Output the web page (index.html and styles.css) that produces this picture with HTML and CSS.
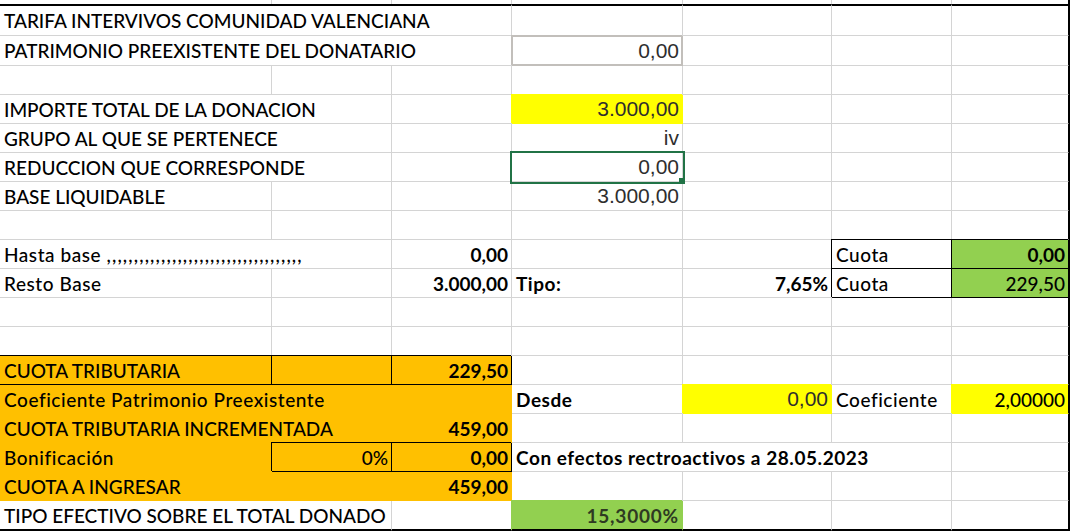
FILE: index.html
```html
<!DOCTYPE html>
<html lang="es">
<head>
<meta charset="utf-8">
<title>Tarifa intervivos</title>
<link rel="stylesheet" href="styles.css">
</head>
<body>
<div class="sheet">
  <!-- stub row above the table -->
  <div class="c stub"></div><div class="c stub"></div><div class="c stub"></div><div class="c stub"></div><div class="c stub"></div><div class="c stub"></div><div class="c stub g"></div>

  <!-- row 1 -->
  <div class="c top s3">TARIFA INTERVIVOS COMUNIDAD VALENCIANA</div>
  <div class="c top"></div><div class="c top"></div><div class="c top"></div><div class="c top g"></div>

  <!-- row 2 -->
  <div class="c s3">PATRIMONIO PREEXISTENTE DEL DONATARIO</div>
  <div class="c num r gbox">0,00</div>
  <div class="c"></div><div class="c"></div><div class="c g"></div>

  <!-- row 3 -->
  <div class="c"></div><div class="c"></div><div class="c"></div><div class="c"></div><div class="c"></div><div class="c"></div><div class="c g"></div>

  <!-- row 4 -->
  <div class="c s2">IMPORTE TOTAL DE LA DONACION</div>
  <div class="c"></div>
  <div class="c num r yel">3.000,00</div>
  <div class="c"></div><div class="c"></div><div class="c g"></div>

  <!-- row 5 -->
  <div class="c s2">GRUPO AL QUE SE PERTENECE</div>
  <div class="c"></div>
  <div class="c num r">iv</div>
  <div class="c"></div><div class="c"></div><div class="c g"></div>

  <!-- row 6 -->
  <div class="c s2">REDUCCION QUE CORRESPONDE</div>
  <div class="c"></div>
  <div class="c num r sel">0,00</div>
  <div class="c"></div><div class="c"></div><div class="c g"></div>

  <!-- row 7 -->
  <div class="c">BASE LIQUIDABLE</div>
  <div class="c"></div><div class="c"></div>
  <div class="c num r">3.000,00</div>
  <div class="c"></div><div class="c"></div><div class="c g"></div>

  <!-- row 8 -->
  <div class="c"></div><div class="c"></div><div class="c"></div><div class="c"></div><div class="c"></div><div class="c"></div><div class="c g"></div>

  <!-- row 9 -->
  <div class="c s2 lc">Hasta base&nbsp;<span class="commas">,,,,,,,,,,,,,,,,,,,,,,,,,,,,,,,,,,,,</span></div>
  <div class="c r b">0,00</div>
  <div class="c"></div><div class="c"></div>
  <div class="c bx lc">Cuota</div>
  <div class="c r b bx grn g">0,00</div>

  <!-- row 10 -->
  <div class="c lc">Resto Base</div>
  <div class="c"></div>
  <div class="c r b">3.000,00</div>
  <div class="c b lc">Tipo:</div>
  <div class="c r b">7,65%</div>
  <div class="c bx lc">Cuota</div>
  <div class="c r bx grn g">229,50</div>

  <!-- row 11 -->
  <div class="c"></div><div class="c"></div><div class="c"></div><div class="c"></div><div class="c"></div><div class="c"></div><div class="c g"></div>
  <!-- row 12 -->
  <div class="c"></div><div class="c"></div><div class="c"></div><div class="c"></div><div class="c"></div><div class="c"></div><div class="c g"></div>

  <!-- row 13 -->
  <div class="c org bx">CUOTA TRIBUTARIA</div>
  <div class="c org bx"></div>
  <div class="c r b org bx">229,50</div>
  <div class="c"></div><div class="c"></div><div class="c"></div><div class="c g"></div>

  <!-- row 14 -->
  <div class="c s3 org lc">Coeficiente Patrimonio Preexistente</div>
  <div class="c b lc">Desde</div>
  <div class="c num r yel">0,00</div>
  <div class="c lc">Coeficiente</div>
  <div class="c r yel g">2,00000</div>

  <!-- row 15 -->
  <div class="c s2 org">CUOTA TRIBUTARIA INCREMENTADA</div>
  <div class="c r b org">459,00</div>
  <div class="c"></div><div class="c"></div><div class="c"></div><div class="c g"></div>

  <!-- row 16 -->
  <div class="c org lc">Bonificación</div>
  <div class="c r org bx">0%</div>
  <div class="c r b org bx">0,00</div>
  <div class="c s3 b lc">Con efectos rectroactivos a 28.05.2023</div>
  <div class="c g"></div>

  <!-- row 17 -->
  <div class="c s2 org">CUOTA A INGRESAR</div>
  <div class="c r b org">459,00</div>
  <div class="c"></div><div class="c"></div><div class="c"></div><div class="c g"></div>

  <!-- row 18 -->
  <div class="c s2 last">TIPO EFECTIVO SOBRE EL TOTAL DONADO</div>
  <div class="c last"></div>
  <div class="c r b grn dim big last">15,3000%</div>
  <div class="c last"></div><div class="c last"></div><div class="c last g"></div>
</div>
</body>
</html>
```

FILE: styles.css
```css
html, body {
  margin: 0;
  padding: 0;
  background: #ffffff;
}

.sheet {
  display: grid;
  grid-template-columns: 272px 120px 120px 171px 149px 120px 117px;
  grid-template-rows: 4px 32px 30px repeat(15, 29px) 30px;
  width: 1069px;
  border-right: 1px solid #000;
  font-family: "Lato", "Liberation Sans", sans-serif;
  font-size: 19px;
  font-weight: 500;
  color: #000;
}

.c {
  box-sizing: border-box;
  display: flex;
  align-items: center;
  padding: 0 3px 0 4px;
  white-space: nowrap;
  overflow: visible;
  border-right: 1px solid #d4d4d4;
  border-bottom: 1px solid #d4d4d4;
  min-width: 0;
}

.stub { border-bottom: none; }
.top { border-top: 2px solid #000; }
.last { border-bottom: 2px solid #000; }

.s2 { grid-column: span 2; }
.s3 { grid-column: span 3; }

.r { justify-content: flex-end; }
.b { font-weight: 700; }

/* mixed-case labels: Calibri's lower case runs a little wider */
.lc { letter-spacing: 0.55px; }
.commas { letter-spacing: 1.1px; }

.num {
  font-family: "Liberation Sans", Arial, sans-serif;
  font-size: 21px;
  font-weight: 400;
  color: #2e2e2e;
}

.dim { color: #2e3a22; }
.big { letter-spacing: 0.8px; }

/* fills: cover the neighbouring grid lines like a filled spreadsheet cell */
.yel {
  background: #ffff00;
  border-right-color: #ffff00;
  border-bottom-color: #ffff00;
  box-shadow: -1px -1px 0 #ffff00;
}
.grn {
  background: #92d050;
  border-right-color: #92d050;
  border-bottom-color: #92d050;
  box-shadow: -1px -1px 0 #92d050;
}
.org {
  background: #ffc000;
  border-right-color: #ffc000;
  border-bottom-color: #ffc000;
}

/* thin black cell borders */
.bx {
  border-right-color: #000;
  border-bottom-color: #000;
  box-shadow: -1px -1px 0 #000;
}

/* light grey border round the input cell */
.gbox {
  border-right-color: #c2bfbb;
  border-bottom-color: #c2bfbb;
  box-shadow: -1px -1px 0 #c2bfbb, inset 1px 1px 0 #c2bfbb, inset -1px -1px 0 #c2bfbb;
}

/* active cell */
.sel {
  position: relative;
  outline: 2px solid #217346;
  outline-offset: 0;
}
.sel::after {
  content: "";
  position: absolute;
  right: -3px;
  bottom: -3px;
  width: 6px;
  height: 6px;
  background: #217346;
}

/* column G sits against the sheet's right border */
.g { border-right-color: #000; }
.last.grn { border-bottom-color: #000; }
```
